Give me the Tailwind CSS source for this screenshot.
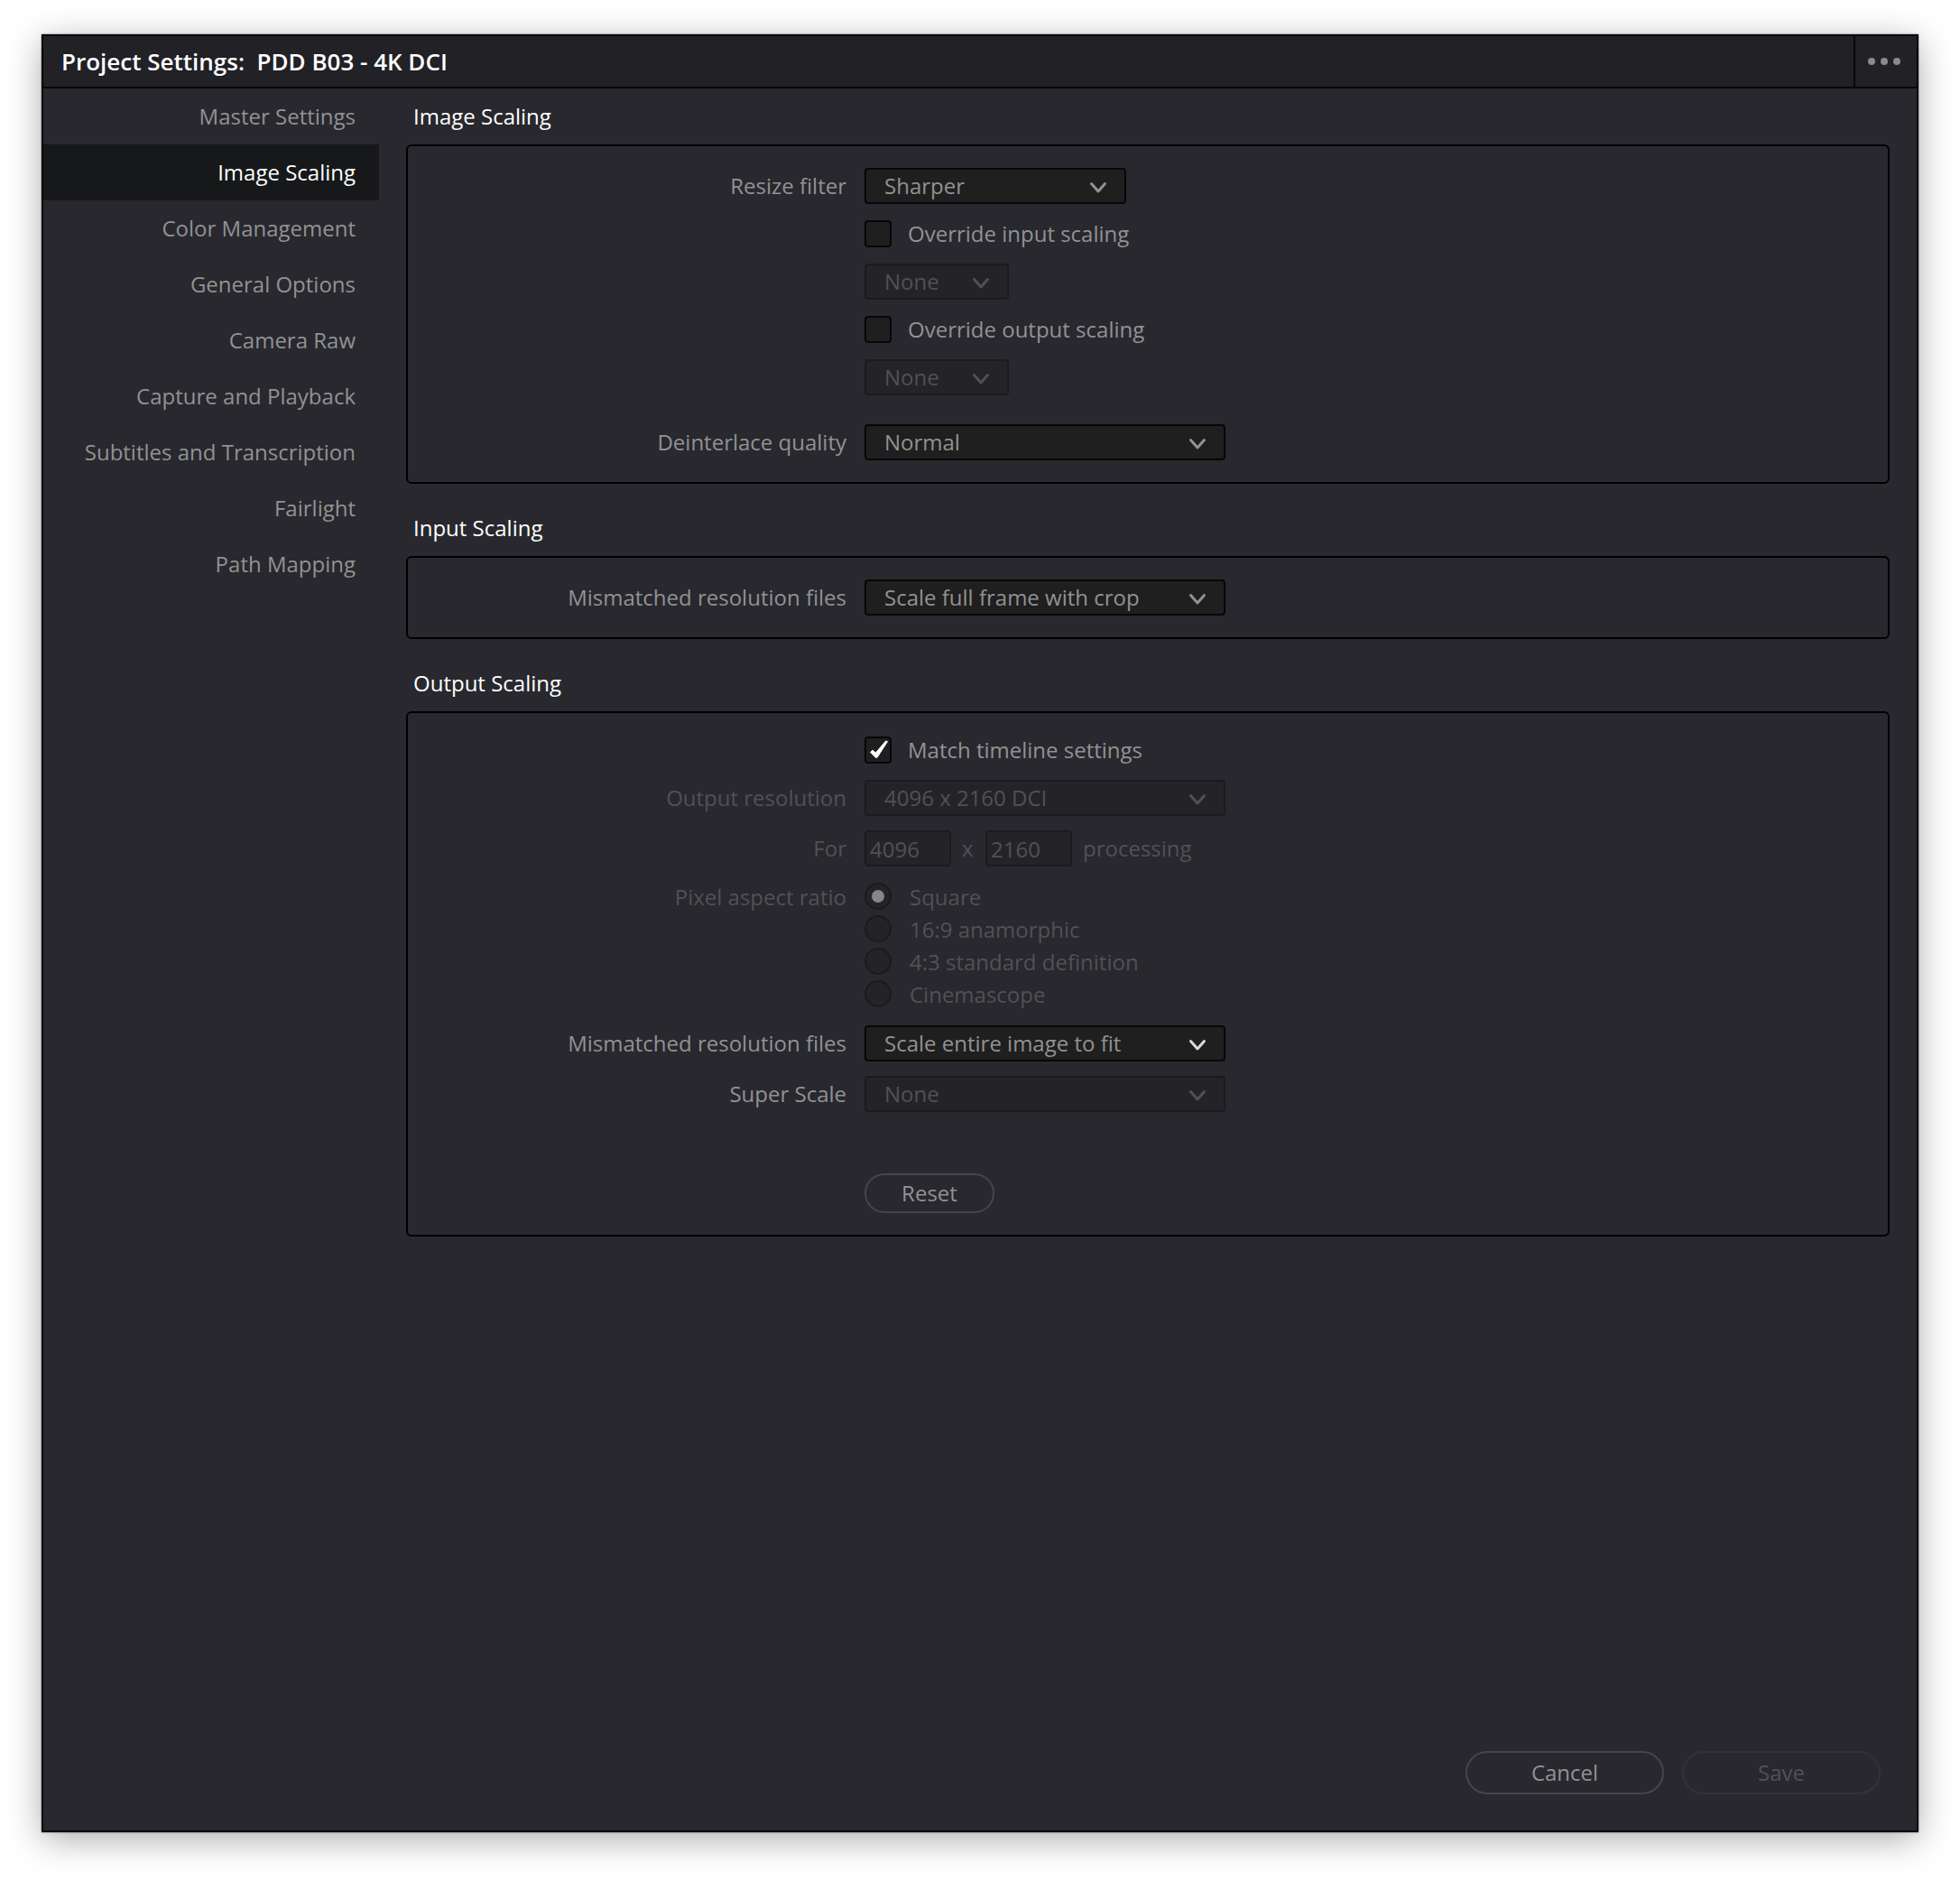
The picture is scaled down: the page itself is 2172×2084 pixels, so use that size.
<!DOCTYPE html>
<html lang="en">
<head>
    <meta charset="UTF-8">
    <meta name="viewport" content="width=device-width, initial-scale=1.0">
    <title>Project Settings</title>
    <script src="https://cdn.jsdelivr.net/npm/@tailwindcss/browser@4"></script>
</head>
<body class="bg-white font-['Open_Sans',sans-serif] text-2xl text-[#929292]">
    <div class="min-h-screen flex pt-[38px] px-[46px] pb-[54px]">
        <div class="flex-1 flex flex-col bg-[#28282e] border-2 border-[#040406] shadow-[0_0_2px_rgba(0,0,0,0.5),0_8px_36px_rgba(0,0,0,0.32)]">

            <!-- Title bar -->
            <header class="flex items-stretch h-[58px] bg-[#212126] border-b-2 border-[#08080b]">
                <h1 class="flex-1 pl-5 text-[26px] leading-14 font-semibold text-white whitespace-pre">Project Settings:  PDD B03 - 4K DCI</h1>
                <button type="button" aria-label="More options" class="w-[70px] pl-[14px] border-l-2 border-[#08080b]">
                    <svg class="w-9 h-2" viewBox="0 0 36 8" fill="#8a8a8b">
                        <circle cx="4" cy="4" r="4"/>
                        <circle cx="18" cy="4" r="4"/>
                        <circle cx="32" cy="4" r="4"/>
                    </svg>
                </button>
            </header>

            <div class="flex-1 flex">
                <!-- Sections -->
                <nav class="w-[372px] shrink-0 flex flex-col text-right leading-[62px]">
                    <a href="#" class="pr-[26px]">Master Settings</a>
                    <a href="#" class="pr-[26px] bg-[#17181a] text-white">Image Scaling</a>
                    <a href="#" class="pr-[26px]">Color Management</a>
                    <a href="#" class="pr-[26px]">General Options</a>
                    <a href="#" class="pr-[26px]">Camera Raw</a>
                    <a href="#" class="pr-[26px]">Capture and Playback</a>
                    <a href="#" class="pr-[26px]">Subtitles and Transcription</a>
                    <a href="#" class="pr-[26px]">Fairlight</a>
                    <a href="#" class="pr-[26px]">Path Mapping</a>
                </nav>

                <main class="flex-1 px-[30px]">
                    <h2 class="pl-2 leading-[62px] text-white">Image Scaling</h2>
                    <section class="grid grid-cols-[486px_1fr] gap-x-5 gap-y-[18px] border-2 border-black rounded-md py-6 leading-10">
                        <label for="resize" class="text-right">Resize filter</label>
                        <div class="relative w-[290px]">
                            <select id="resize" class="appearance-none block w-full h-10 pl-5 leading-9 bg-[#1f1f1f] border-2 border-[#070708] rounded-sm">
                                <option>Sharper</option>
                            </select>
                            <svg class="absolute right-5 top-[14px] w-[22px] h-4 pointer-events-none" viewBox="0 0 22 16" fill="none" stroke="#929292" stroke-width="3" stroke-linecap="round" stroke-linejoin="round"><path d="M3.5 3.5 11 12 18.5 3.5"/></svg>
                        </div>

                        <div class="col-start-2 flex items-center gap-[18px] h-[30px]">
                            <input type="checkbox" id="override-in" class="appearance-none size-[30px] bg-[#1f1f1f] border-2 border-[#070708] rounded-sm">
                            <label for="override-in">Override input scaling</label>
                        </div>

                        <div class="col-start-2 relative w-40">
                            <select disabled aria-label="Input scaling" class="appearance-none block w-full h-10 pl-5 leading-9 bg-[#242428] border-2 border-[#1b1b1f] rounded-sm text-[#515154] opacity-100">
                                <option>None</option>
                            </select>
                            <svg class="absolute right-5 top-[14px] w-[22px] h-4 pointer-events-none" viewBox="0 0 22 16" fill="none" stroke="#515154" stroke-width="3" stroke-linecap="round" stroke-linejoin="round"><path d="M3.5 3.5 11 12 18.5 3.5"/></svg>
                        </div>

                        <div class="col-start-2 flex items-center gap-[18px] h-[30px]">
                            <input type="checkbox" id="override-out" class="appearance-none size-[30px] bg-[#1f1f1f] border-2 border-[#070708] rounded-sm">
                            <label for="override-out">Override output scaling</label>
                        </div>

                        <div class="col-start-2 relative w-40">
                            <select disabled aria-label="Output scaling" class="appearance-none block w-full h-10 pl-5 leading-9 bg-[#242428] border-2 border-[#1b1b1f] rounded-sm text-[#515154] opacity-100">
                                <option>None</option>
                            </select>
                            <svg class="absolute right-5 top-[14px] w-[22px] h-4 pointer-events-none" viewBox="0 0 22 16" fill="none" stroke="#515154" stroke-width="3" stroke-linecap="round" stroke-linejoin="round"><path d="M3.5 3.5 11 12 18.5 3.5"/></svg>
                        </div>

                        <label for="deinterlace" class="mt-[14px] text-right">Deinterlace quality</label>
                        <div class="relative w-[400px] mt-[14px]">
                            <select id="deinterlace" class="appearance-none block w-full h-10 pl-5 leading-9 bg-[#1f1f1f] border-2 border-[#070708] rounded-sm">
                                <option>Normal</option>
                            </select>
                            <svg class="absolute right-5 top-[14px] w-[22px] h-4 pointer-events-none" viewBox="0 0 22 16" fill="none" stroke="#929292" stroke-width="3" stroke-linecap="round" stroke-linejoin="round"><path d="M3.5 3.5 11 12 18.5 3.5"/></svg>
                        </div>
                    </section>

                    <h2 class="mt-[18px] pl-2 leading-[62px] text-white">Input Scaling</h2>
                    <section class="grid grid-cols-[486px_1fr] gap-x-5 border-2 border-black rounded-md py-6 leading-10">
                        <label for="mismatch-in" class="text-right">Mismatched resolution files</label>
                        <div class="relative w-[400px]">
                            <select id="mismatch-in" class="appearance-none block w-full h-10 pl-5 leading-9 bg-[#1f1f1f] border-2 border-[#070708] rounded-sm">
                                <option>Scale full frame with crop</option>
                            </select>
                            <svg class="absolute right-5 top-[14px] w-[22px] h-4 pointer-events-none" viewBox="0 0 22 16" fill="none" stroke="#929292" stroke-width="3" stroke-linecap="round" stroke-linejoin="round"><path d="M3.5 3.5 11 12 18.5 3.5"/></svg>
                        </div>
                    </section>

                    <h2 class="mt-[18px] pl-2 leading-[62px] text-white">Output Scaling</h2>
                    <section class="grid grid-cols-[486px_1fr] gap-x-5 gap-y-4 border-2 border-black rounded-md pt-[26px] pb-6 leading-10">
                        <div class="col-start-2 flex items-center gap-[18px] h-[30px] mb-[2px]">
                            <span class="relative size-[30px]">
                                <input type="checkbox" id="match" checked class="appearance-none block size-[30px] bg-[#1f1f1f] border-2 border-[#070708] rounded-sm">
                                <svg class="absolute inset-0 size-[30px] pointer-events-none" viewBox="0 0 30 30" fill="#fff" stroke="#fff" stroke-linejoin="round"><path d="M6.5 17.5 9 15.2 12.5 18 23.5 5 25.5 5.5 14.2 23Q13 24 12 23Z"/></svg>
                            </span>
                            <label for="match">Match timeline settings</label>
                        </div>

                        <label for="out-res" class="text-right text-[#515154]">Output resolution</label>
                        <div class="relative w-[400px]">
                            <select id="out-res" disabled class="appearance-none block w-full h-10 pl-5 leading-9 bg-[#242428] border-2 border-[#1b1b1f] rounded-sm text-[#515154] opacity-100">
                                <option>4096 x 2160 DCI</option>
                            </select>
                            <svg class="absolute right-5 top-[14px] w-[22px] h-4 pointer-events-none" viewBox="0 0 22 16" fill="none" stroke="#515154" stroke-width="3" stroke-linecap="round" stroke-linejoin="round"><path d="M3.5 3.5 11 12 18.5 3.5"/></svg>
                        </div>

                        <label for="out-width" class="text-right text-[#515154]">For</label>
                        <div class="flex gap-3 text-[#515154]">
                            <input type="text" id="out-width" disabled value="4096" class="w-24 h-10 pl-1 pt-[2px] bg-[#242428] border-2 border-[#1b1b1f] rounded-sm">
                            <label for="out-height" class="w-[14px]">x</label>
                            <input type="text" id="out-height" disabled value="2160" class="w-24 h-10 pl-1 pt-[2px] bg-[#242428] border-2 border-[#1b1b1f] rounded-sm">
                            <span>processing</span>
                        </div>

                        <span class="mt-[2px] text-right leading-8 text-[#515154]">Pixel aspect ratio</span>
                        <div role="radiogroup" aria-label="Pixel aspect ratio" class="flex flex-col gap-[6px] mt-[2px] mb-1 leading-8 text-[#515154]">
                            <div class="flex gap-5 h-[30px]">
                                <span class="relative size-[30px]">
                                    <input type="radio" name="par" id="par-square" disabled checked class="appearance-none block size-[30px] bg-[#242428] border-2 border-[#1b1b1f] rounded-full">
                                    <span class="absolute inset-2 rounded-full bg-[#85858a] pointer-events-none"></span>
                                </span>
                                <label for="par-square">Square</label>
                            </div>
                            <div class="flex gap-5 h-[30px]">
                                <input type="radio" name="par" id="par-169" disabled class="appearance-none size-[30px] bg-[#242428] border-2 border-[#1b1b1f] rounded-full">
                                <label for="par-169">16:9 anamorphic</label>
                            </div>
                            <div class="flex gap-5 h-[30px]">
                                <input type="radio" name="par" id="par-43" disabled class="appearance-none size-[30px] bg-[#242428] border-2 border-[#1b1b1f] rounded-full">
                                <label for="par-43">4:3 standard definition</label>
                            </div>
                            <div class="flex gap-5 h-[30px]">
                                <input type="radio" name="par" id="par-scope" disabled class="appearance-none size-[30px] bg-[#242428] border-2 border-[#1b1b1f] rounded-full">
                                <label for="par-scope">Cinemascope</label>
                            </div>
                        </div>

                        <label for="mismatch-out" class="text-right">Mismatched resolution files</label>
                        <div class="relative w-[400px]">
                            <select id="mismatch-out" class="appearance-none block w-full h-10 pl-5 leading-9 bg-[#1f1f1f] border-2 border-[#070708] rounded-sm">
                                <option>Scale entire image to fit</option>
                            </select>
                            <svg class="absolute right-5 top-[14px] w-[22px] h-4 pointer-events-none" viewBox="0 0 22 16" fill="none" stroke="#dadada" stroke-width="3" stroke-linecap="round" stroke-linejoin="round"><path d="M3.5 3.5 11 12 18.5 3.5"/></svg>
                        </div>

                        <label for="super-scale" class="text-right">Super Scale</label>
                        <div class="relative w-[400px]">
                            <select id="super-scale" disabled class="appearance-none block w-full h-10 pl-5 leading-9 bg-[#242428] border-2 border-[#1b1b1f] rounded-sm text-[#515154] opacity-100">
                                <option>None</option>
                            </select>
                            <svg class="absolute right-5 top-[14px] w-[22px] h-4 pointer-events-none" viewBox="0 0 22 16" fill="none" stroke="#515154" stroke-width="3" stroke-linecap="round" stroke-linejoin="round"><path d="M3.5 3.5 11 12 18.5 3.5"/></svg>
                        </div>

                        <button type="button" class="col-start-2 mt-[52px] w-36 h-11 leading-10 border-2 border-[#43474c] rounded-full">Reset</button>
                    </section>
                </main>
            </div>

            <footer class="flex justify-end gap-5 p-10">
                <button type="button" class="w-[220px] h-12 border-2 border-[#43474c] rounded-full">Cancel</button>
                <button type="button" disabled class="w-[220px] h-12 border-2 border-[#323237] rounded-full text-[#515154]">Save</button>
            </footer>
        </div>
    </div>
</body>
</html>
